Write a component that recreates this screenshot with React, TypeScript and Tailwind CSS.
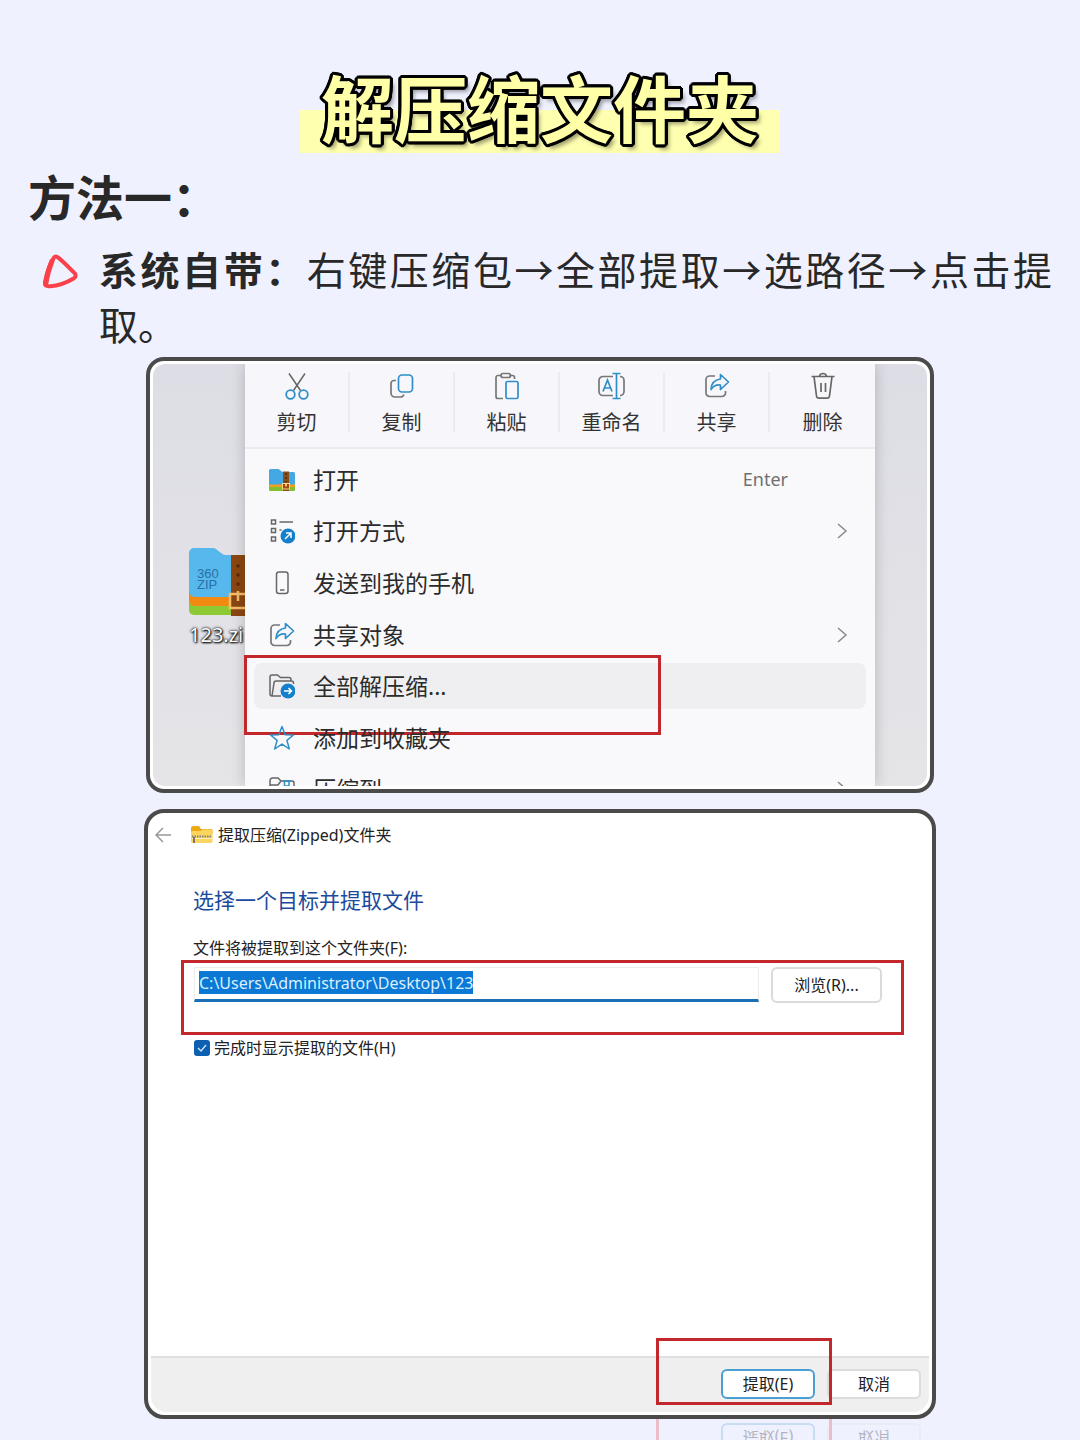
import type { ReactNode } from "react";

function ScissorsIcon() {
  return (
    <svg className="shrink-0" width="28" height="28" viewBox="0 0 28 28" fill="none" strokeWidth="1.5" aria-hidden="true">
      <path d="M6 1.5l11.5 17M22 1.5l-11.5 17" stroke="#666" />
      <circle cx="7.5" cy="22.5" r="4.3" stroke="#2f8ec9" strokeWidth="1.8" />
      <circle cx="20.5" cy="22.5" r="4.3" stroke="#2f8ec9" strokeWidth="1.8" />
    </svg>
  );
}

function CopyIcon() {
  return (
    <svg className="shrink-0" width="28" height="28" viewBox="0 0 28 28" fill="none" strokeWidth="1.7" aria-hidden="true">
      <path d="M8 8.5H6a3 3 0 0 0-3 3V21a4 4 0 0 0 4 4h5.500a3.500 3.500 0 0 0 3.400-2.500" stroke="#777" />
      <rect x="10.500" y="3" width="14" height="17" rx="3.500" stroke="#2f8ec9" />
    </svg>
  );
}

function PasteIcon() {
  return (
    <svg className="shrink-0" width="28" height="28" viewBox="0 0 28 28" fill="none" strokeWidth="1.7" aria-hidden="true">
      <path d="M8.500 3.500H5a2 2 0 0 0-2 2v19a2 2 0 0 0 2 2h5M16.500 3.500h3a2 2 0 0 1 2 2V7" stroke="#777" />
      <rect x="8" y="1.500" width="9.500" height="4" rx="2" stroke="#777" />
      <rect x="13" y="9.500" width="12" height="17" rx="1.500" stroke="#2f8ec9" />
    </svg>
  );
}

function RenameIcon() {
  return (
    <svg className="shrink-0" width="28" height="28" viewBox="0 0 28 28" fill="none" strokeWidth="1.7" aria-hidden="true">
      <path d="M15 4.500H5a4 4 0 0 0-4 4v11a4 4 0 0 0 4 4h10M22 4.500a4 4 0 0 1 4 4v11a4 4 0 0 1-4 4" stroke="#777" />
      <path d="M14.500 1.500h8M14.500 26.500h8M18.500 1.500v25M5 19.500L9.500 8 14 19.500M6.500 16h6" stroke="#2f8ec9" />
    </svg>
  );
}

function ShareIcon() {
  return (
    <svg className="shrink-0" width="28" height="28" viewBox="0 0 28 28" fill="none" strokeWidth="1.7" strokeLinejoin="round" aria-hidden="true">
      <path d="M12 4H6.500A3.500 3.500 0 0 0 3 7.500V21a3.500 3.500 0 0 0 3.500 3.500H19a3.500 3.500 0 0 0 3.500-3.500v-2" stroke="#777" />
      <path d="M17.500 2.500l8 7.500-8 7.500V13c-4-.5-7 .8-9.500 4.500.3-6 3.500-9.800 9.500-10.500z" stroke="#2f8ec9" />
    </svg>
  );
}

function TrashIcon() {
  return (
    <svg className="shrink-0" width="28" height="28" viewBox="0 0 28 28" fill="none" stroke="#666" strokeWidth="1.7" aria-hidden="true">
      <path d="M2.500 4.500h23M5 4.500l2.500 19.500a2.500 2.500 0 0 0 2.500 2.200h8a2.500 2.500 0 0 0 2.500-2.200L23 4.500M10.500 4.500a3.500 3 0 0 1 7 0M12 11v9M16.500 11v9" />
    </svg>
  );
}

function SmallZipIcon() {
  return (
    <svg width="26" height="26" viewBox="0 0 26 26" aria-hidden="true">
      <path d="M0 17h26v5.500a1.500 1.500 0 0 1-1.500 1.500h-23A1.500 1.500 0 0 1 0 22.500z" fill="#84bd2e" />
      <path d="M0 14h26v6H0z" fill="#f0a020" />
      <path d="M0 3.500A1.500 1.500 0 0 1 1.500 2h8l4 3H24.500A1.500 1.500 0 0 1 26 6.500V17.500H0z" fill="#43a8e4" />
      <path d="M14 4.500h6V24h-6z" fill="#86501d" />
      <path d="M17 6v9" stroke="#4d2c10" strokeWidth="1.500" strokeDasharray="2 2" />
      <rect x="13.500" y="16.500" width="7" height="5.500" fill="#a24a12" stroke="#ffd47a" />
      <path d="M17 16v3.500" stroke="#ffe49c" strokeWidth="1.500" />
    </svg>
  );
}

function OpenWithIcon() {
  return (
    <svg width="26" height="26" viewBox="0 0 26 26" fill="none" strokeWidth="1.500" aria-hidden="true">
      <path d="M2.500 2h4v4h-4zM2.500 10.500h4v4h-4zM2.500 19h4v4h-4zM10.500 4h13.500M10.500 12h2" stroke="#666" />
      <circle cx="19" cy="18" r="7.500" fill="#1480cc" />
      <path d="M16 21l5.500-5.500M17 15h5v5" stroke="#fff" />
    </svg>
  );
}

function PhoneIcon() {
  return (
    <svg width="26" height="26" viewBox="0 0 26 26" fill="none" stroke="#666" strokeWidth="1.500" aria-hidden="true">
      <rect x="7.500" y="2" width="11.500" height="21.500" rx="2.500" />
      <path d="M11 20h4.500" />
    </svg>
  );
}

function ExtractIcon() {
  return (
    <svg width="26" height="26" viewBox="0 0 26 26" fill="none" strokeWidth="1.500" aria-hidden="true">
      <path d="M3 23a2 2 0 0 1-2-2V4a2 2 0 0 1 2-2h5.500l3 2.500H20a2 2 0 0 1 2 2V8M3 23l2-13a2 2 0 0 1 2-2h15.500a2 2 0 0 1 2 2v1M3 23h9" stroke="#666" />
      <circle cx="19" cy="18" r="7.500" fill="#1480cc" />
      <path d="M15 18h7.500M19.500 15l3 3-3 3" stroke="#fff" />
    </svg>
  );
}

function StarIcon() {
  return (
    <svg width="26" height="26" viewBox="0 0 26 26" fill="none" stroke="#2f8ec9" strokeWidth="1.500" strokeLinejoin="round" aria-hidden="true">
      <path d="M13 1.500l3.100 8.200 8.400.3-6.600 5.300 2.400 8.700-7.300-4.900L5.700 24l2.400-8.700L1.500 10l8.400-.3z" />
    </svg>
  );
}

function ArchiveIcon() {
  return (
    <svg width="26" height="26" viewBox="0 0 26 26" fill="none" strokeWidth="1.500" aria-hidden="true">
      <path d="M1 22V4.500A2.500 2.500 0 0 1 3.500 2H9l3 3h11a2 2 0 0 1 2 2v15M1 9h8l3-4" stroke="#666" />
      <path d="M14 5h8M15.500 5v5h4.500V5" stroke="#2f8ec9" />
    </svg>
  );
}

function ChevronIcon() {
  return (
    <svg width="12" height="18" viewBox="0 0 12 18" fill="none" stroke="#888" strokeWidth="1.500" aria-hidden="true">
      <path d="M2 2l8 7-8 7" />
    </svg>
  );
}

function ZipFileIcon() {
  return (
    <svg className="shrink-0" width="76" height="70" viewBox="0 0 76 70" aria-hidden="true">
      <path d="M0 48h76v15a5 5 0 0 1-5 5H5a5 5 0 0 1-5-5z" fill="#8cc932" />
      <path d="M0 42h76v17H6a6 6 0 0 1-6-6z" fill="#f28a12" />
      <path d="M0 6a5 5 0 0 1 5-5h19c4 0 8 7 13 7h34a5 5 0 0 1 5 5v37H6a6 6 0 0 1-6-6z" fill="#56b8ec" />
      <path d="M42 8h22v61H42z" fill="#8b4712" />
      <g fill="#5e2b08">
        <circle cx="49" cy="19" r="1.800" />
        <circle cx="49" cy="28" r="1.800" />
        <circle cx="49" cy="37" r="1.800" />
      </g>
      <path d="M66 47H41v14h25M49 44v10" fill="none" stroke="#f6bd6a" strokeWidth="2.500" />
      <g fill="#2a6fa8" fontFamily="Liberation Sans" fontSize="13">
        <text x="8" y="31">360</text>
        <text x="8" y="42">ZIP</text>
      </g>
    </svg>
  );
}

function ZippedFolderIcon() {
  return (
    <svg width="22" height="20" viewBox="0 0 22 20" aria-hidden="true">
      <path d="M0 3a2 2 0 0 1 2-2h6l2 3h10a1.500 1.500 0 0 1 1.500 1.500V9H0z" fill="#eca916" />
      <path d="M0 7.500A1.500 1.500 0 0 1 1.500 6H10l1.500-1.500H20A1.500 1.500 0 0 1 21.500 6v10.500a1.500 1.500 0 0 1-1.500 1.500H1.500A1.500 1.500 0 0 1 0 16.500z" fill="#fbd560" />
      <path d="M1 11.500h20" stroke="#8a8577" strokeWidth="2" strokeDasharray="1.500 1" />
      <path d="M1 13.500h20" stroke="#fff1bd" />
      <path d="M3 12v6" stroke="#777" strokeWidth="2" />
    </svg>
  );
}

const tools = [
  { label: "剪切", icon: <ScissorsIcon /> },
  { label: "复制", icon: <CopyIcon /> },
  { label: "粘贴", icon: <PasteIcon /> },
  { label: "重命名", icon: <RenameIcon /> },
  { label: "共享", icon: <ShareIcon /> },
  { label: "删除", icon: <TrashIcon /> },
];

type MenuItem = {
  label: string;
  icon: ReactNode;
  shortcut?: string;
  submenu?: boolean;
  marked?: boolean;
};

const menuItems: MenuItem[] = [
  { label: "打开", icon: <SmallZipIcon />, shortcut: "Enter" },
  { label: "打开方式", icon: <OpenWithIcon />, submenu: true },
  { label: "发送到我的手机", icon: <PhoneIcon /> },
  { label: "共享对象", icon: <ShareIcon />, submenu: true },
  { label: "全部解压缩...", icon: <ExtractIcon />, marked: true },
  { label: "添加到收藏夹", icon: <StarIcon /> },
  { label: "压缩到", icon: <ArchiveIcon />, submenu: true },
];

function ContextMenu() {
  return (
    <div className="z-10 min-w-0 flex-1 bg-[#f9f9fc] shadow-[0_0_14px_rgba(0,0,0,0.2)]">
      <div className="grid h-[85px] grid-cols-6 border-b-2 border-[#ebebee] bg-[#f7f7fb] pt-2">
        {tools.map((t) => (
          <button
            key={t.label}
            className="flex h-[60px] flex-col items-center gap-[14px] border-r-2 border-[#ececf0] text-[20px] leading-[18px] text-[#333] last:border-r-0"
          >
            {t.icon}
            {t.label}
          </button>
        ))}
      </div>
      <ul className="flex h-[366px] flex-col pt-[5px]">
        {menuItems.map((item) => (
          <li key={item.label} className="relative flex flex-1 items-center px-[9px]">
            <button
              className={
                item.marked
                  ? "flex h-[46px] w-full items-center rounded-lg bg-[#efeff2] pr-[18px] pl-[15px]"
                  : "flex h-[46px] w-full items-center pr-[18px] pl-[15px]"
              }
            >
              <span className="flex w-[26px] shrink-0 justify-center">{item.icon}</span>
              <span className="ml-[18px] text-[23px] leading-8 text-[#2b2b2b]">{item.label}</span>
              {item.shortcut && (
                <span className="mr-[60px] ml-auto text-[18px] text-[#707070]">{item.shortcut}</span>
              )}
              {item.submenu && (
                <span className="ml-auto">
                  <ChevronIcon />
                </span>
              )}
            </button>
            {item.marked && (
              <div className="pointer-events-none absolute -top-[5px] -left-px h-20 w-[417px] border-3 border-[#c1272b]" />
            )}
          </li>
        ))}
      </ul>
    </div>
  );
}

function DesktopShot() {
  return (
    <div className="mx-[2px] rounded-[18px] border-4 border-[#4a4a4a] bg-white p-[3px]">
      <div className="flex h-[422px] overflow-hidden rounded-xl bg-linear-to-b from-[#dddde5] to-[#e5e5e8]">
        <div className="w-[92px] shrink-0 overflow-hidden pt-[183px] pl-[36px]">
          <div className="flex flex-col items-start">
            <ZipFileIcon />
            <span className="mt-1 text-[20px] leading-7 text-white [text-shadow:0_0_1px_#000,1px_1px_2px_#000,0_0_3px_#000]">
              123.zi
            </span>
          </div>
        </div>
        <ContextMenu />
        <div className="w-[52px] shrink-0" />
      </div>
    </div>
  );
}

function ExtractDialog() {
  return (
    <div className="mt-4 rounded-[20px] border-4 border-[#4a4a4a] bg-white p-[3px]">
      <div className="flex h-[596px] flex-col overflow-hidden rounded-2xl text-[16px] leading-6 text-[#222]">
        <div className="flex h-[38px] items-center pl-1">
          <button aria-label="返回" className="mr-5">
            <svg width="16" height="16" viewBox="0 0 16 16" fill="none" stroke="#999" strokeWidth="1.500">
              <path d="M16 8H1M8 1L1 8l7 7" />
            </svg>
          </button>
          <ZippedFolderIcon />
          <span className="ml-[5px]">提取压缩(Zipped)文件夹</span>
        </div>
        <div className="px-[42px]">
          <h3 className="mt-[30px] text-[21px] leading-8 text-[#1b4a9c]">选择一个目标并提取文件</h3>
          <label htmlFor="target" className="mt-5 block">
            文件将被提取到这个文件夹(F):
          </label>
        </div>
        <div className="mr-[25px] ml-[30px] flex h-[75px] items-start gap-3 border-3 border-[#c1272b] pt-1 pr-[19px] pl-[10px]">
          <div className="flex h-[35px] min-w-0 flex-1 items-start border border-b-3 border-[#ececec] border-b-[#1a6fb5] pt-[3px] pl-1">
            <input
              id="target"
              defaultValue="C:\Users\Administrator\Desktop\123"
              className="field-sizing-content h-[23px] bg-[#0a78d4] text-[16px] text-[#d9efff] outline-none"
            />
          </div>
          <button className="h-9 w-[111px] rounded-md border-2 border-[#dadada]">浏览(R)...</button>
        </div>
        <label className="mt-px flex items-center gap-1 pl-[43px]">
          <input type="checkbox" defaultChecked className="peer sr-only" />
          <span className="flex size-4 items-center justify-center rounded-[3px] bg-[#0d5fb0]">
            <svg width="10" height="8" viewBox="0 0 10 8" fill="none" stroke="#cfe6ff" strokeWidth="1.300">
              <path d="M1 4l3 3 5-6" />
            </svg>
          </span>
          完成时显示提取的文件(H)
        </label>
        <div className="relative mt-auto flex h-14 justify-end gap-3 border-t-2 border-[#e0e0e0] bg-[#efefef] pt-[11px] pr-2">
          <button className="h-[30px] w-[94px] rounded-md border-2 border-[#4b9fd2] bg-white">提取(E)</button>
          <button className="h-[30px] w-[94px] rounded-md border-2 border-[#dcdcdc] bg-white">取消</button>
          <div className="pointer-events-none absolute -top-5 right-[97px] h-[67px] w-[176px] border-3 border-[#c1272b]" />
        </div>
      </div>
    </div>
  );
}

// faint mirrored copy of the dialog's footer, as if it stood on glass
function Reflection() {
  return (
    <div className="mx-[7px] h-[22px] overflow-hidden opacity-25" aria-hidden="true">
      <div className="relative flex h-14 -scale-y-100 items-end justify-end gap-3 pr-2 pb-1 text-[16px]">
        <span className="h-[30px] w-[94px] rounded-md border-2 border-[#4b9fd2] text-center leading-[26px]">提取(E)</span>
        <span className="h-[30px] w-[94px] rounded-md border-2 border-[#dcdcdc] text-center leading-[26px]">取消</span>
        <div className="absolute right-[97px] bottom-0 h-14 w-[176px] border-x-3 border-[#e0272b]" />
      </div>
    </div>
  );
}

export default function App() {
  return (
    <main className="min-h-screen overflow-hidden bg-[#eff1ff] pt-[55px] font-['Noto_Sans','Noto_Sans_CJK_SC',sans-serif]">
      <header className="flex justify-center">
        {/* the ring of hard shadows gives the letters a round-cornered outline */}
        <h1 className="h-[98px] bg-[linear-gradient(transparent_56%,#ffffb0_56%)] px-[21px] pt-[9px] font-['Noto_Sans_CJK_SC',sans-serif] text-[73px] leading-[82px] font-bold text-[#ffffa8] [text-shadow:3px_0_#000,3px_1px_#000,2px_2px_#000,1px_3px_#000,0_3px_#000,-1px_3px_#000,-2px_2px_#000,-3px_1px_#000,-3px_0_#000,-3px_-1px_#000,-2px_-2px_#000,-1px_-3px_#000,0_-3px_#000,1px_-3px_#000,2px_-2px_#000,3px_-1px_#000,4px_5px_4px_rgba(0,0,0,0.4)]">
          解压缩文件夹
        </h1>
      </header>
      <section className="px-[28px] font-['Noto_Sans_CJK_SC',sans-serif] text-[#282828]">
        <h2 className="mt-2 text-[48px] leading-[68px] font-bold">方法一：</h2>
        <div className="mt-3 flex items-start">
          <svg className="mt-3 ml-[13px] shrink-0" width="40" height="38" viewBox="0 0 40 38" fill="none" aria-hidden="true">
            <path
              d="M13 4.500C8 12 5.500 21 4 29c-.5 3.500 1 4.500 5 4.200 9-.7 17-3.700 24-8 2.500-1.700 2-4-.5-6.200C27 14 22 8 16.500 4.200c-1.500-1-2.500-1-3.500.3z"
              stroke="#fa4048"
              strokeWidth="4"
              strokeLinejoin="round"
            />
            <path d="M11 8C8 16 6 22 5 30" stroke="#fa4048" strokeWidth="5" strokeLinecap="round" />
          </svg>
          <p className="ml-[18px] flex-1 text-justify text-[39px] leading-[55px]">
            <b>系统自带：</b>右键压缩包→全部提取→选路径→点击提取。
          </p>
        </div>
      </section>
      <section className="mx-auto mt-[6px] max-w-[792px]">
        <DesktopShot />
        <ExtractDialog />
        <Reflection />
      </section>
    </main>
  );
}
